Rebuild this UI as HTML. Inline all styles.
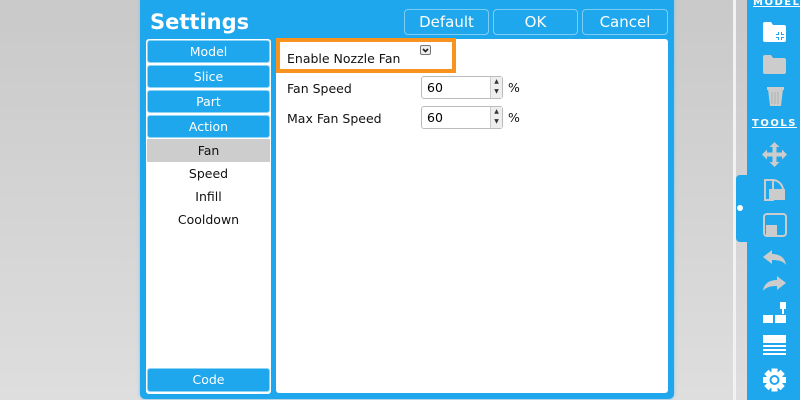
<!DOCTYPE html>
<html><head><style>
*{margin:0;padding:0;box-sizing:border-box}
body{width:800px;height:400px;overflow:hidden;position:relative;font-family:"Liberation Sans","DejaVu Sans",sans-serif;background:linear-gradient(#c9c9c9,#dedede)}
.abs{position:absolute}
.dlg{left:140px;top:-4px;width:534px;height:403px;background:#1ea7ec;border-radius:5px;box-shadow:0 0 3px #7bc6ee}
.title{left:150px;top:10px;color:#fff;font-weight:bold;font-size:21px;font-family:"DejaVu Sans",sans-serif}
.btn{top:9px;height:26px;border:1px solid #7fcdf3;border-radius:4px;color:#fff;font-size:15px;text-align:center;line-height:24px;font-family:"DejaVu Sans",sans-serif}
.left{left:146px;top:39px;width:125px;height:355px;background:#fff;border-radius:3px}
.tab{left:147px;width:123px;height:23px;background:#1ea7ec;border:1px solid #8fd3f5;border-radius:3px;color:#fff;font-size:12.5px;text-align:center;line-height:21px;font-family:"DejaVu Sans",sans-serif}
.item{left:147px;width:123px;height:23px;font-size:12.5px;text-align:center;line-height:23px;color:#111;font-family:"DejaVu Sans",sans-serif}
.right{left:276px;top:39px;width:392px;height:354px;background:#fff;border-radius:3px}
.lbl{font-size:12.5px;color:#111;font-family:"DejaVu Sans",sans-serif}
.inp{left:421px;width:82px;height:23px;border:1px solid #bbb;border-radius:3px;background:#fff;font-size:12.5px;padding-left:5px;line-height:21px;font-family:"DejaVu Sans",sans-serif}
.spin{position:absolute;right:0;top:0;width:12px;height:21px;background:#eee;border-left:1px solid #ccc;font-size:6px;line-height:10px;text-align:center;color:#333}
.sb{left:747px;top:0;width:53px;height:400px;background:#1ea7ec}
.hd{color:#fff;font-weight:bold;font-size:10px;letter-spacing:1.5px;text-decoration:underline;font-family:"DejaVu Sans",sans-serif}
</style></head><body>
<div class="abs dlg"></div>
<div class="abs title">Settings</div>
<div class="abs btn" style="left:404px;width:85px">Default</div>
<div class="abs btn" style="left:493px;width:85px">OK</div>
<div class="abs btn" style="left:582px;width:86px">Cancel</div>
<div class="abs left"></div>
<div class="abs tab" style="top:40px">Model</div>
<div class="abs tab" style="top:65px">Slice</div>
<div class="abs tab" style="top:90px">Part</div>
<div class="abs tab" style="top:115px">Action</div>
<div class="abs item" style="top:139px;background:#cdcdcd">Fan</div>
<div class="abs item" style="top:162px">Speed</div>
<div class="abs item" style="top:185px">Infill</div>
<div class="abs item" style="top:208px">Cooldown</div>
<div class="abs tab" style="top:368px;height:24px;line-height:22px">Code</div>
<div class="abs right"></div>
<div class="abs" style="left:276px;top:38px;width:180px;height:35px;border:4px solid #f7931e"></div>
<div class="abs lbl" style="left:287px;top:51px">Enable Nozzle Fan</div>
<div class="abs" style="left:420px;top:45px;width:11px;height:10px;border:1px solid #777;border-radius:2px;background:#eee"><svg width="9" height="8" style="display:block"><path d="M2 3l2.5 2.5L7 3" fill="none" stroke="#222" stroke-width="1.6"/></svg></div>
<div class="abs lbl" style="left:287px;top:81px">Fan Speed</div>
<div class="abs inp" style="top:76px">60<div class="spin">▲<br>▼</div></div>
<div class="abs lbl" style="left:508px;top:80px">%</div>
<div class="abs lbl" style="left:287px;top:111px">Max Fan Speed</div>
<div class="abs inp" style="top:106px">60<div class="spin">▲<br>▼</div></div>
<div class="abs lbl" style="left:508px;top:110px">%</div>
<div class="abs" style="left:733px;top:0;width:3px;height:400px;background:#f2f2f2"></div>
<div class="abs" style="left:736px;top:175px;width:12px;height:67px;background:#1ea7ec;border-radius:4px 0 0 4px"></div>
<div class="abs" style="left:737px;top:205px;width:6px;height:6px;border-radius:50%;background:#fff"></div>
<div class="abs sb"></div>
<div class="abs hd" style="left:753px;top:-3px">MODEL</div>
<div class="abs hd" style="left:752px;top:118px">TOOLS</div>
<svg class="abs" style="left:747px;top:0" width="53" height="400">
<path d="M16 24q0-2 2-2h6l2 3h11q2 0 2 2v13q0 2-2 2h-19q-2 0-2-2z" fill="#fff"/>
<path d="M29 36h8M33 32v8" stroke="#1ea7ec" stroke-width="4"/><path d="M29 36h8M33 32v8" stroke="#fff" stroke-width="2"/>
<path d="M16 57q0-2 2-2h6l2 3h11q2 0 2 2v12q0 2-2 2h-19q-2 0-2-2z" fill="#ccc"/>
<path d="M21 89h15l-2 17h-11z" fill="#ccc"/><path d="M20 87h17v3h-17z" fill="#ccc"/>
<path d="M25 92v12M28 92v12M31 92v12" stroke="#aaa" stroke-width="0.8"/>
<path d="M27.5 142l5 5h-3v5.5h5.5v-3l5 5-5 5v-3h-5.5v5.5h3l-5 5-5-5h3v-5.5h-5.5v3l-5-5 5-5v3h5.5v-5.5h-3z" fill="#ccc"/>
<g fill="none" stroke="#ccc" stroke-width="2"><path d="M18 180h8v20h-8z"/><path d="M26 180a11 11 0 0 1 10 9"/></g>
<rect x="22" y="189" width="16" height="11" fill="#ccc"/>
<rect x="17" y="214" width="22" height="22" rx="3" fill="none" stroke="#ccc" stroke-width="2"/><rect x="19" y="225" width="11" height="10" fill="#ccc"/>
<path d="M16 257l9-7v4c7 0 13 3 14 11-3-4-8-5-14-5v4z" fill="#ccc"/>
<path d="M39 283l-9-7v4c-7 0-13 3-14 11 3-4 8-5 14-5v4z" fill="#ccc"/>
<g fill="#fff"><rect x="33" y="302" width="6" height="7"/><rect x="35" y="309" width="2" height="5"/><rect x="16" y="315" width="10" height="8"/><rect x="28" y="315" width="11" height="8"/></g>
<g fill="#fff"><rect x="16" y="335" width="23" height="8"/><rect x="16" y="345" width="23" height="2"/><rect x="16" y="349" width="23" height="2"/><rect x="16" y="353" width="23" height="2"/></g>
<g transform="translate(27.5 380)"><circle r="8.5" fill="#fff"/><g fill="#fff"><rect x="-3" y="-11.5" width="6" height="23"/><rect x="-11.5" y="-3" width="23" height="6"/><rect x="-3" y="-11.5" width="6" height="23" transform="rotate(45)"/><rect x="-3" y="-11.5" width="6" height="23" transform="rotate(-45)"/></g><circle r="5" fill="#1ea7ec"/><circle r="3" fill="#fff"/></g>
</svg>
</body></html>
